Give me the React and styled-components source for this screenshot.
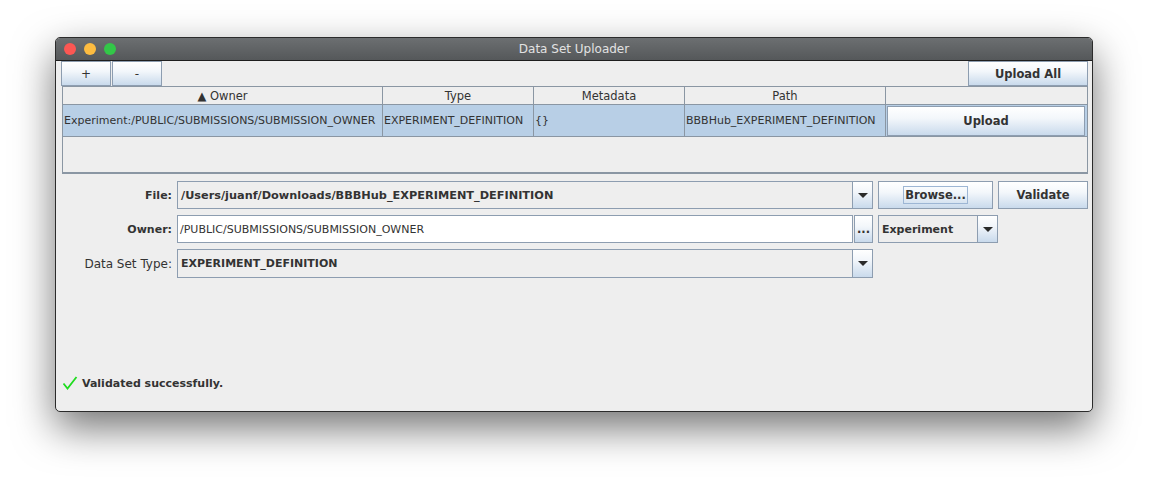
import React from 'react';
import styled, { createGlobalStyle } from 'styled-components';

const Global = createGlobalStyle`
  html, body {
    margin: 0;
    padding: 0;
    background: #ffffff;
    font-family: "DejaVu Sans", "Noto Sans", sans-serif;
    color: #333333;
  }
`;

const Page = styled.div`
  width: 1149px;
  height: 486px;
  padding: 37px 0 0 55px;
  box-sizing: border-box;
`;

const Window = styled.div`
  width: 1038px;
  height: 375px;
  box-sizing: border-box;
  border: 1px solid #2b2b2b;
  border-radius: 5px;
  overflow: hidden;
  background: #eeeeee;
  box-shadow: 0 16px 40px rgba(0, 0, 0, 0.55);
  display: flex;
  flex-direction: column;
`;

const TitleBar = styled.div`
  height: 22px;
  flex: none;
  position: relative;
  background: linear-gradient(#6c6f71, #55585a);
  border-bottom: 1px solid #1e1e1e;
  display: flex;
  align-items: center;
  justify-content: center;
  color: #e2e2e2;
  font-size: 12px;
`;

const Lights = styled.div`
  position: absolute;
  left: 8px;
  top: 5px;
  display: flex;
  gap: 8px;
`;

const Light = styled.span`
  width: 12px;
  height: 12px;
  border-radius: 50%;
  background: ${p => p.color};
`;

const Body = styled.div`
  flex: 1;
  display: flex;
  flex-direction: column;
  padding: 0 4px 0 5px;
`;

const Toolbar = styled.div`
  display: flex;
  justify-content: space-between;
  height: 25px;
`;

const Group = styled.div`
  display: flex;
  gap: 1px;
`;

const Button = styled.button`
  box-sizing: border-box;
  width: ${p => p.w}px;
  height: ${p => p.h || 25}px;
  padding: 0;
  margin: 0;
  border: 1px solid #8d9db0;
  background: linear-gradient(#ffffff 0%, #f3f7fb 40%, #c9daec 100%);
  font-family: inherit;
  font-size: ${p => (p.bold ? '11.5px' : '12px')};
  font-weight: ${p => (p.bold ? 'bold' : 'normal')};
  color: #333333;
  display: flex;
  align-items: center;
  justify-content: center;
`;

const Focus = styled.span`
  border: 1px solid #9db6d4;
  padding: 1px 1px;
  line-height: 14px;
`;

const Table = styled.div`
  margin-left: 1px;
  width: 1026px;
  height: 88px;
  box-sizing: border-box;
  border: 1px solid #8a96a3;
  border-top: none;
  border-bottom-width: 2px;
  display: flex;
  flex-direction: column;
`;

const cols = '320px 151px 151px 201px 1fr';

const HeaderRow = styled.div`
  display: grid;
  grid-template-columns: ${cols};
  height: 19px;
  box-sizing: border-box;
  border-top: 1px solid #8a96a3;
  border-bottom: 1px solid #8a96a3;
`;

const HeaderCell = styled.div`
  border-right: ${p => (p.last ? 'none' : '1px solid #8a96a3')};
  font-size: 11.5px;
  display: flex;
  align-items: center;
  justify-content: center;
  color: #333;
  white-space: nowrap;
`;

const DataRow = styled.div`
  display: grid;
  grid-template-columns: ${cols};
  height: 32px;
  box-sizing: border-box;
  background: #b8cfe6;
  border-bottom: 1px solid #8a96a3;
`;

const Cell = styled.div`
  border-right: ${p => (p.last ? 'none' : '1px solid #8a96a3')};
  font-size: 11px;
  display: flex;
  align-items: center;
  overflow: hidden;
  white-space: nowrap;
  color: #333;
  padding: ${p => (p.last ? '1px' : '0 0 0 1px')};
`;

const Form = styled.div`
  margin-top: 7px;
  display: flex;
  flex-direction: column;
  gap: 6px;
`;

const Row = styled.div`
  display: flex;
  align-items: center;
  gap: 5px;
  height: ${p => p.h || 28}px;
`;

const Label = styled.div`
  width: 111px;
  text-align: right;
  font-size: ${p => (p.bold ? '11px' : '12px')};
  font-weight: ${p => (p.bold ? 'bold' : 'normal')};
  color: #333;
  white-space: nowrap;
`;

const Combo = styled.div`
  width: ${p => p.w}px;
  height: 100%;
  box-sizing: border-box;
  border: 1px solid #8d9db0;
  display: flex;
  background: #eeeeee;
`;

const ComboText = styled.div`
  flex: 1;
  box-sizing: border-box;
  border-right: 1px solid #8d9db0;
  display: flex;
  align-items: center;
  padding-left: 3px;
  font-size: ${p => p.size || 11}px;
  font-weight: bold;
  color: #333;
  white-space: nowrap;
  overflow: hidden;
`;

const Arrow = styled.div`
  width: 19px;
  flex: none;
  background: linear-gradient(#ffffff 0%, #f1f5fa 40%, #c9daec 100%);
  display: flex;
  align-items: center;
  justify-content: center;
`;

const Triangle = styled.span`
  width: 0;
  height: 0;
  border-left: 5px solid transparent;
  border-right: 5px solid transparent;
  border-top: 5px solid #2a2a2a;
`;

const FieldGroup = styled.div`
  display: flex;
  gap: 1px;
  height: 100%;
`;

const TextField = styled.div`
  width: ${p => p.w}px;
  box-sizing: border-box;
  border: 1px solid #8d9db0;
  background: #ffffff;
  display: flex;
  align-items: center;
  padding-left: 2px;
  font-size: 11px;
  color: #333;
  white-space: nowrap;
`;

const Spacer = styled.div`
  flex: 1;
`;

const Status = styled.div`
  display: flex;
  align-items: center;
  gap: 4px;
  margin: 0 0 20px 1px;
  font-size: 11px;
  font-weight: bold;
  color: #333;
`;

const DownArrow = () => (
  <Arrow>
    <Triangle />
  </Arrow>
);

export default function App() {
  return (
    <>
      <Global />
      <Page>
        <Window>
          <TitleBar>
            <Lights>
              <Light color="#fc5753" />
              <Light color="#fdbc40" />
              <Light color="#33c748" />
            </Lights>
            Data Set Uploader
          </TitleBar>
          <Body>
            <Toolbar>
              <Group>
                <Button w={50}>+</Button>
                <Button w={50}>-</Button>
              </Group>
              <Button w={120} bold>Upload All</Button>
            </Toolbar>
            <Table>
              <HeaderRow>
                <HeaderCell>▲ Owner</HeaderCell>
                <HeaderCell>Type</HeaderCell>
                <HeaderCell>Metadata</HeaderCell>
                <HeaderCell>Path</HeaderCell>
                <HeaderCell last />
              </HeaderRow>
              <DataRow>
                <Cell>Experiment:/PUBLIC/SUBMISSIONS/SUBMISSION_OWNER</Cell>
                <Cell>EXPERIMENT_DEFINITION</Cell>
                <Cell>{'{}'}</Cell>
                <Cell>BBBHub_EXPERIMENT_DEFINITION</Cell>
                <Cell last>
                  <Button w={198} h={30} bold>Upload</Button>
                </Cell>
              </DataRow>
            </Table>
            <Form>
              <Row>
                <Label bold>File:</Label>
                <Combo w={696}>
                  <ComboText size={11.3}>/Users/juanf/Downloads/BBBHub_EXPERIMENT_DEFINITION</ComboText>
                  <DownArrow />
                </Combo>
                <Button w={115} h={28} bold><Focus>Browse...</Focus></Button>
                <Button w={90} h={28} bold>Validate</Button>
              </Row>
              <Row>
                <Label bold>Owner:</Label>
                <FieldGroup>
                  <TextField w={676}>/PUBLIC/SUBMISSIONS/SUBMISSION_OWNER</TextField>
                  <Button w={19} h={28} bold>...</Button>
                </FieldGroup>
                <Combo w={120}>
                  <ComboText>Experiment</ComboText>
                  <DownArrow />
                </Combo>
              </Row>
              <Row h={29}>
                <Label>Data Set Type:</Label>
                <Combo w={696}>
                  <ComboText>EXPERIMENT_DEFINITION</ComboText>
                  <DownArrow />
                </Combo>
              </Row>
            </Form>
            <Spacer />
            <Status>
              <svg width="16" height="16" viewBox="0 0 16 16">
                <path d="M1.5 8.5 L5.5 13.5 L14.5 2" fill="none" stroke="#1fdc1f" strokeWidth="1.8" />
              </svg>
              Validated successfully.
            </Status>
          </Body>
        </Window>
      </Page>
    </>
  );
}
